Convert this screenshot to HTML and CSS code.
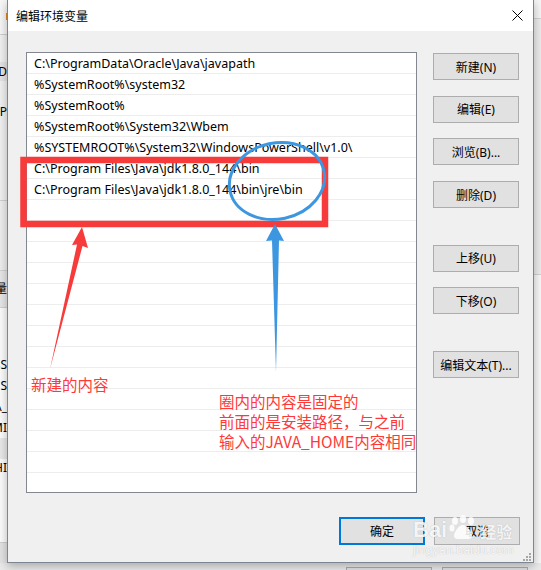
FILE: index.html
```html
<!DOCTYPE html>
<html>
<head>
<meta charset="utf-8">
<link rel="stylesheet" href="styles.css">
</head>
<body>
<div class="screen">
  <div class="main">
    <div class="bg-left">
      <div class="bl bl-a"><span class="mark"></span></div>
      <div class="bl bl-b"></div>
      <div class="bl bl-c">D</div>
      <div class="bl bl-d"><span class="pl">P</span></div>
      <div class="bl bl-e"></div>
      <div class="bl bl-f">量</div>
      <div class="bl bl-g">
        <span>SS</span><span>S</span><span>A_</span><span>MI</span>
      </div>
      <div class="bl bl-h"></div>
      <div class="bl bl-i">HI</div>
      <div class="bl bl-j"></div>
    </div>

    <div class="dialog">
      <div class="titlebar">
        <span class="title">编辑环境变量</span>
        <svg class="close" width="11" height="11" viewBox="0 0 11 11"><path d="M0.5 0.5 L10.5 10.5 M10.5 0.5 L0.5 10.5" stroke="#000" stroke-width="1" fill="none"/></svg>
      </div>
      <div class="body">
        <div class="content">
          <div class="list">
            <div class="row">C:\ProgramData\Oracle\Java\javapath</div>
            <div class="row">%SystemRoot%\system32</div>
            <div class="row">%SystemRoot%</div>
            <div class="row">%SystemRoot%\System32\Wbem</div>
            <div class="row">%SYSTEMROOT%\System32\WindowsPowerShell\v1.0\</div>
            <div class="row">C:\Program Files\Java\jdk1.8.0_144\bin</div>
            <div class="row">C:\Program Files\Java\jdk1.8.0_144\bin\jre\bin</div>
            <div class="row"></div><div class="row"></div><div class="row"></div>
            <div class="row"></div><div class="row"></div><div class="row"></div>
            <div class="row"></div><div class="row"></div><div class="row"></div>
            <div class="row"></div><div class="row"></div><div class="row"></div>
            <div class="row"></div><div class="row"></div>
          </div>
          <div class="side">
            <button class="btn">新建(N)</button>
            <button class="btn">编辑(E)</button>
            <button class="btn">浏览(B)...</button>
            <button class="btn">删除(D)</button>
            <button class="btn spaced">上移(U)</button>
            <button class="btn">下移(O)</button>
            <button class="btn spaced">编辑文本(T)...</button>
          </div>
        </div>
        <div class="footer">
          <button class="btn tall primary">确定</button>
          <button class="btn tall">取消</button>
        </div>
      </div>
      <svg class="grip" width="9" height="9" viewBox="0 0 9 9">
        <rect x="7" y="1" width="2" height="2" fill="#a6a6a6"/>
        <rect x="4" y="4" width="2" height="2" fill="#a6a6a6"/>
        <rect x="7" y="4" width="2" height="2" fill="#a6a6a6"/>
        <rect x="1" y="7" width="2" height="2" fill="#a6a6a6"/>
        <rect x="4" y="7" width="2" height="2" fill="#a6a6a6"/>
        <rect x="7" y="7" width="2" height="2" fill="#a6a6a6"/>
      </svg>
    </div>

    <div class="bg-right">
      <div class="br br-a"></div>
      <div class="br br-b"></div>
      <div class="br br-c"></div>
    </div>
  </div>
  <div class="bottom-strip">
    <span class="under-btn"></span>
    <span class="under-btn"></span>
  </div>

  <svg class="annot" width="541" height="570" viewBox="0 0 541 570">
    <rect x="23.5" y="160" width="301.5" height="64" fill="none" stroke="#f73b3b" stroke-width="6.5"/>
    <ellipse cx="277" cy="181" rx="48" ry="38" transform="rotate(-12 277 181)" fill="none" stroke="#3d96e0" stroke-width="3"/>
    <polygon points="82,227 72,245 77,244.5 50,369 82.5,246 88,248" fill="#f73b3b"/>
    <polygon points="275,224 266,241 272,240.5 276,372 279,240.5 284,241" fill="#3d96e0"/>
  </svg>

  <div class="note note-new">新建的内容</div>
  <div class="note note-circle">圈内的内容是固定的<br>前面的是安装路径，与之前<br>输入的JAVA_HOME内容相同</div>

  <div class="watermark">
    <div class="wm-top">
      <span class="wm-bai">Bai</span>
      <svg class="paw" width="30" height="26" viewBox="0 0 30 26">
        <ellipse cx="7" cy="6" rx="3" ry="4" fill="rgba(255,255,255,0.85)"/>
        <ellipse cx="15" cy="4" rx="3" ry="4" fill="rgba(255,255,255,0.85)"/>
        <ellipse cx="23" cy="6" rx="3" ry="4" fill="rgba(255,255,255,0.85)"/>
        <ellipse cx="4" cy="13" rx="2.5" ry="3.5" fill="rgba(255,255,255,0.85)"/>
        <path d="M15 10 C10 10 6 18 6 21 C6 25 12 24 15 24 C18 24 24 25 24 21 C24 18 20 10 15 10 Z" fill="rgba(255,255,255,0.85)"/>
      </svg>
      <span class="wm-jy">经验</span>
    </div>
    <div class="wm-url">jingyan.baidu.com</div>
  </div>
</div>
</body>
</html>
```
FILE: styles.css
```css
html, body {
  margin: 0;
  padding: 0;
}
body {
  width: 541px;
  height: 570px;
  overflow: hidden;
  background: #f0f0f0;
  font-family: "Noto Sans", "Noto Sans CJK SC", sans-serif;
  font-size: 12px;
  color: #000;
}
.screen {
  position: relative;
  width: 541px;
  height: 570px;
}
.main {
  display: flex;
  height: 563px;
}

/* background window, left side */
.bg-left {
  width: 7px;
  flex: none;
  display: flex;
  flex-direction: column;
  overflow: hidden;
  font-size: 12px;
}
.bl {
  display: flex;
  justify-content: flex-end;
  white-space: nowrap;
  box-sizing: border-box;
}
.bl-a { height: 35px; background: #f6f6f6; border-bottom: 1px solid #cfcfcf; align-items: center; }
.mark { width: 1px; height: 7px; background: #e08a2a; }
.bl-b { height: 28px; background: #f0f0f0; }
.bl-c { height: 19px; background: #e4e4e4; line-height: 19px; }
.bl-d { height: 121px; background: #f0f0f0; border-bottom: 1px solid #cfcfcf; padding-top: 22px; }
.pl { line-height: 18px; height: 18px; }
.bl-e { height: 71px; background: #ededed; border-bottom: 1px solid #cfcfcf; }
.bl-f { height: 37px; background: #e6e6e6; border-bottom: 1px solid #cfcfcf; line-height: 36px; }
.bl-g {
  height: 131px;
  background: #fbfbfb;
  flex-direction: column;
  align-items: flex-end;
  padding-top: 27px;
  line-height: 21px;
}
.bl-h { height: 21px; background: #e8e8e8; }
.bl-i { height: 85px; background: #fbfbfb; border-bottom: 1px solid #cfcfcf; line-height: 18px; }
.bl-j { height: 20px; background: #e3e3e3; }

/* dialog */
.dialog {
  position: relative;
  z-index: 1;
  width: 527px;
  height: 563px;
  flex: none;
  box-sizing: border-box;
  border: 1px solid #7b8692;
  border-top: none;
  background: #f0f0f0;
  display: flex;
  flex-direction: column;
  box-shadow: 0 3px 9px rgba(0, 0, 0, 0.28);
}
.titlebar {
  height: 31px;
  flex: none;
  background: #fff;
  display: flex;
  align-items: center;
  justify-content: space-between;
  padding: 0 10px 0 8px;
}
.title {
  font-size: 12px;
  letter-spacing: 0;
}
.close {
  display: block;
}
.body {
  flex: 1;
  padding: 21px 13px 0 18px;
  display: flex;
  flex-direction: column;
}
.content {
  display: flex;
  gap: 16px;
}
.list {
  width: 391px;
  height: 441px;
  flex: none;
  box-sizing: border-box;
  border: 1px solid #828790;
  background: #fff;
  overflow: hidden;
}
.row {
  height: 19px;
  line-height: 20px;
  padding-top: 1px;
  border-bottom: 1px solid #ededed;
  padding-left: 7px;
  white-space: nowrap;
  font-size: 12.5px;
}
.side {
  display: flex;
  flex-direction: column;
  gap: 15.7px;
  padding-top: 1px;
  width: 86px;
}
.btn {
  width: 86px;
  height: 27px;
  box-sizing: border-box;
  border: 1px solid #adadad;
  background: #e1e1e1;
  font-family: "Noto Sans", "Noto Sans CJK SC", sans-serif;
  font-size: 12px;
  color: #000;
  padding: 0;
  margin: 0;
  white-space: nowrap;
}
.side .spaced {
  margin-top: 21px;
}
.footer {
  display: flex;
  justify-content: flex-end;
  gap: 9px;
  margin-top: 24px;
}
.btn.tall {
  height: 28px;
}
.btn.primary {
  border: 2px solid #0078d7;
}
.grip {
  position: absolute;
  right: 2px;
  bottom: 1px;
}

/* background window, right side */
.bg-right {
  flex: 1;
  display: flex;
  flex-direction: column;
}
.br-a { height: 18px; background: #f5f5f5; border-bottom: 1px solid #d2d2d2; }
.br-b { height: 255px; background: #ebebeb; border-bottom: 1px solid #d2d2d2; }
.br-c { flex: 1; background: #f7f7f7; }

.bottom-strip {
  height: 7px;
  display: flex;
  gap: 10px;
  padding: 4px 0 0 346px;
  box-sizing: border-box;
  overflow: hidden;
  background: #e9e9e9;
}
.under-btn {
  width: 86px;
  height: 12px;
  flex: none;
  box-sizing: border-box;
  border: 1px solid #adadad;
  background: #e1e1e1;
}

/* annotations */
.annot {
  position: absolute;
  left: 0;
  top: 0;
  z-index: 2;
  pointer-events: none;
}
.note {
  position: absolute;
  z-index: 3;
  color: #ff3838;
  font-family: "Noto Sans CJK SC", sans-serif;
  font-size: 15.5px;
  line-height: 20px;
  white-space: nowrap;
}
.note-new {
  left: 31px;
  top: 374px;
}
.note-circle {
  left: 219px;
  top: 391px;
}

/* watermark */
.watermark {
  position: absolute;
  z-index: 4;
  left: 413px;
  top: 514px;
  width: 102px;
  color: rgba(255, 255, 255, 0.88);
  text-shadow: 0 0 1px rgba(0, 0, 0, 0.25);
}
.wm-top {
  display: flex;
  align-items: flex-end;
  height: 28px;
}
.wm-bai {
  font-family: "Liberation Sans", sans-serif;
  font-weight: bold;
  font-size: 22px;
  line-height: 24px;
}
.paw {
  display: block;
  margin: 0 2px 1px 1px;
}
.wm-jy {
  font-family: "Noto Sans CJK SC", sans-serif;
  font-weight: bold;
  font-size: 16px;
  line-height: 22px;
}
.wm-url {
  font-family: "Liberation Sans", sans-serif;
  font-size: 12.5px;
  line-height: 14px;
  margin-top: 1px;
}
```
